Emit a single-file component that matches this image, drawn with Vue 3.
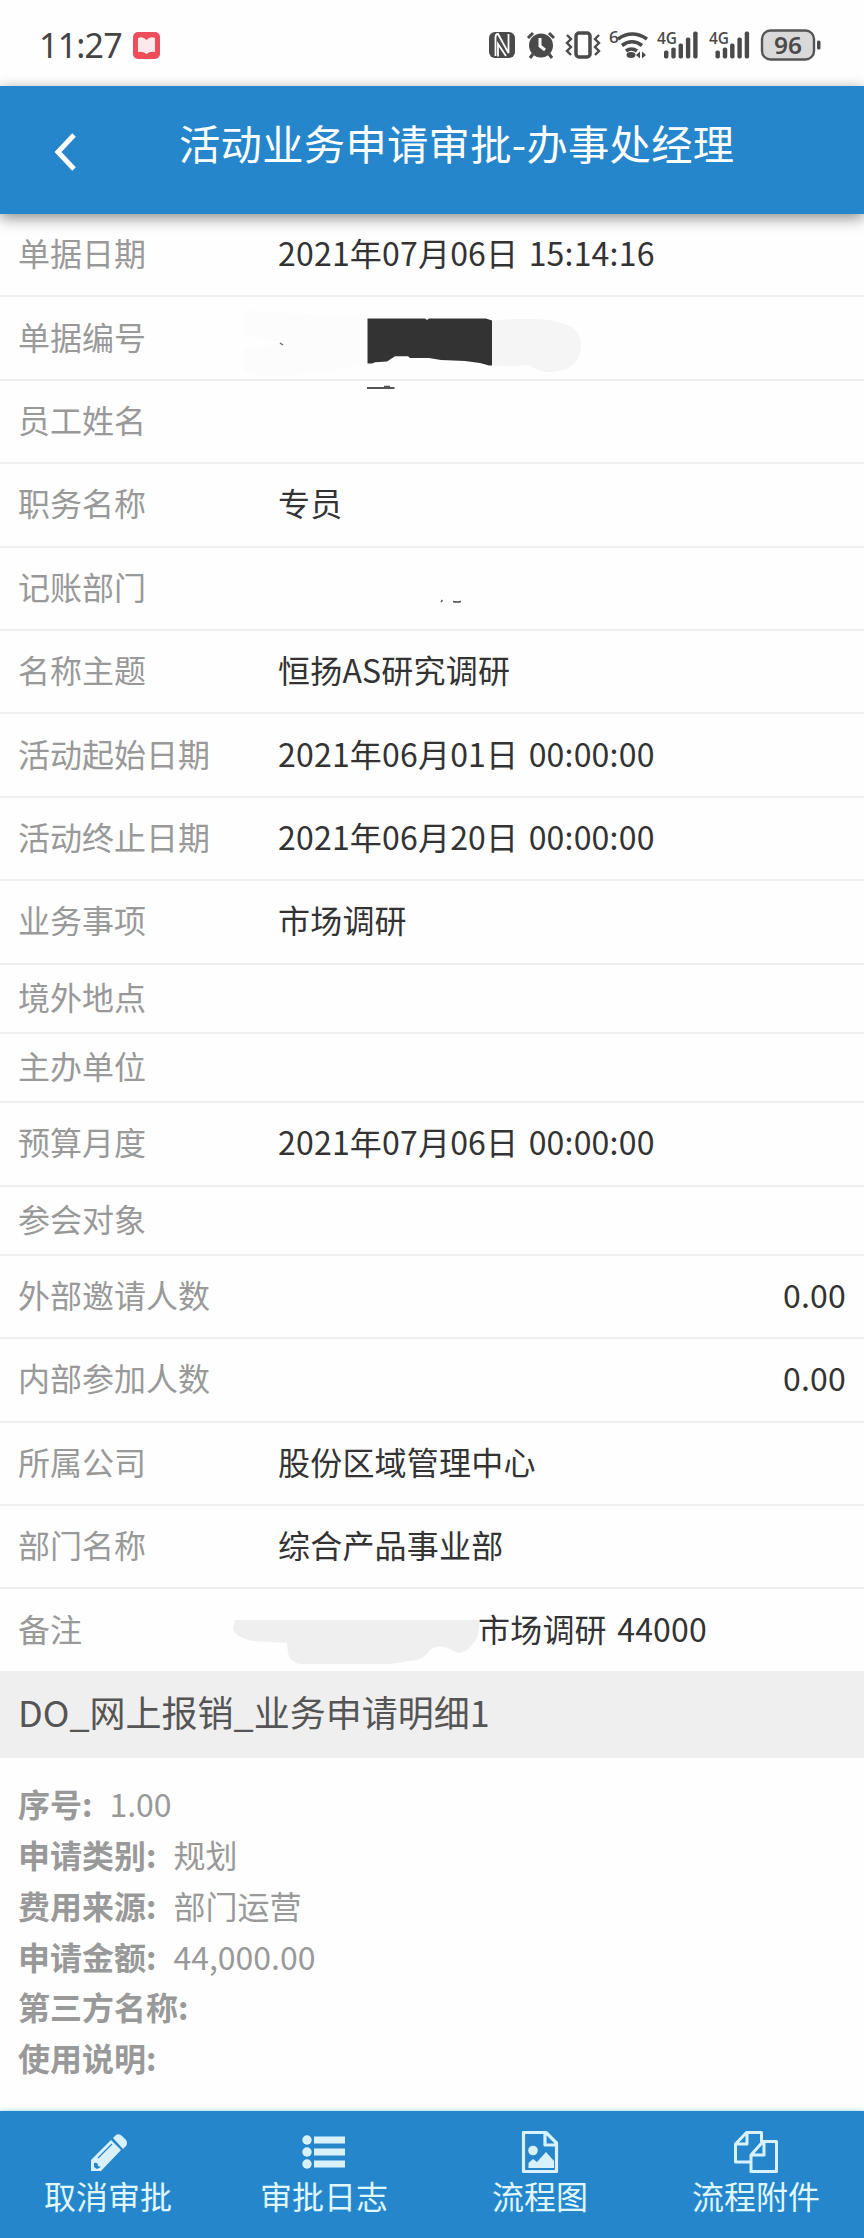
<template>
    <div class="page">
        <div class="status-bar">
            <span class="clock">11:27</span>
            <svg class="app-badge" viewBox="0 0 27 27">
                <rect width="27" height="27" rx="5" fill="#ee4e5c" />
                <path d="M5 6 Q10 4 13.5 8 Q17 4 22 6 V20 Q17 19 13.5 22 Q10 19 5 20 Z" fill="#fde9ec" />
            </svg>
            <svg class="status-icons" viewBox="0 0 340 40">
                <g fill="#4a4a4a">
                    <rect x="2" y="7" width="26" height="26" rx="6" />
                    <path d="M8.500 31V12Q8.500 9 11 9L21.500 28V9M11 31.500V19l8 12" fill="none" stroke="#fff" stroke-width="1.800" />
                    <circle cx="54" cy="20.500" r="12" />
                    <path d="M41 13l5-5M67 13l-5-5M46 29l-3 4M62 29l3 4" stroke="#4a4a4a" stroke-width="3" />
                    <path d="M53 13v8l5 4" fill="none" stroke="#fff" stroke-width="3" />
                    <rect x="89" y="8" width="14" height="24" rx="3" fill="none" stroke="#4a4a4a" stroke-width="3.500" />
                    <path d="M80 10l4 4-4 4 4 4-4 4 4 4M112 10l-4 4 4 4-4 4 4 4-4 4" fill="none" stroke="#4a4a4a" stroke-width="2.400" />
                    <text x="122" y="18" class="tiny">6</text>
                    <g fill="none" stroke="#4a4a4a" stroke-width="3.600">
                        <path d="M131 14q14-10 29 0" />
                        <path d="M135 20.500q10-7.500 20 0" />
                        <path d="M139 26q5.500-4 11 0" />
                    </g>
                    <ellipse cx="144" cy="30" rx="4.500" ry="3" />
                    <path d="M149 30l4-3.500v7zM159 30l-4-3.500v7z" />
                    <text x="170" y="19" class="tiny" textLength="20" lengthAdjust="spacingAndGlyphs">4G</text>
                    <text x="222" y="19" class="tiny" textLength="20" lengthAdjust="spacingAndGlyphs">4G</text>
                    <g v-for="x in [177, 228.5]" :key="x">
                        <rect
                            v-for="(h, i) in [8, 11, 15, 21, 27]"
                            :key="h"
                            :x="x + i * 7.3"
                            :y="33.5 - h"
                            width="4.400"
                            :height="h"
                            rx="1.800"
                        />
                    </g>
                    <rect x="275" y="5.500" width="52" height="29" rx="8.500" fill="#d9d9d9" stroke="#555" stroke-width="2.400" />
                    <rect x="330" y="15.500" width="3.500" height="9" rx="1.500" />
                    <text x="287" y="28.500" class="battery" textLength="28" lengthAdjust="spacingAndGlyphs">96</text>
                </g>
            </svg>
        </div>

        <header class="title-bar">
            <svg class="back" viewBox="0 0 24 38">
                <path d="M20 2 L4 19 L20 36" fill="none" stroke="#fff" stroke-width="5" />
            </svg>
            <h1>活动业务申请审批-办事处经理</h1>
        </header>

        <ul class="field-list">
            <li v-for="field in fields" :key="field.label" class="field" :class="{ short: field.short }">
                <span class="label">{{ field.label }}</span>
                <span class="value" :class="{ number: field.number, indent: field.indent }">{{ field.value }}</span>
                <svg v-if="field.mask === 'code'" class="mask mask-code" viewBox="0 0 360 92">
                    <path d="M5 11 L128 19 V64 Q80 76 40 77 Q8 77 5 71 V50 Q40 46 40 43 Q25 40 5 35Z" fill="#fcfcfc" />
                    <path d="M250 22 L275 20 H300 Q314 21 322 24 Q342 28 342 47 Q341 68 320 72 Q304 76 290 66 Q270 68 250 66Z" fill="#f5f5f5" />
                    <path d="M128.500 19.500H186l2 1.500 2-1.500h57l6 2V66.500h-3L241 64l-15-2-24-1-12-2h-19l-2-1.700H156l-8 5.300-12 .700-3 1.300h-4.500z" fill="#333" />
                    <path d="M41 44l3 2" stroke="#666" stroke-width="1.500" />
                    <path d="M128 89h27.500M145 87.600h6" stroke="#555" stroke-width="1.800" />
                </svg>
                <svg v-if="field.mask === 'dept'" class="mask mask-dept" viewBox="0 0 24 6">
                    <path d="M1 4l1.500-2M13 3.500q4 1 8 0" fill="none" stroke="#555" stroke-width="1.400" />
                </svg>
                <svg v-if="field.mask === 'remark'" class="mask mask-remark" viewBox="0 0 250 50">
                    <path d="M3 1 H247 Q249 17 239 27 Q233 34 226 34 L213 28 Q204 26 198 31 Q191 43 175 42 Q160 46 140 45 H68 Q57 43 56 34 L55 24 L21 22 Q2 18 1 9Z" fill="#efefef" />
                </svg>
            </li>
        </ul>

        <h2 class="section-title">DO_网上报销_业务申请明细1</h2>

        <div class="detail">
            <p v-for="item in details" :key="item.label">
                <b>{{ item.label }}:</b>
                <span>{{ item.value }}</span>
            </p>
        </div>

        <nav class="toolbar">
            <a class="tool">
                <svg viewBox="0 0 44 44">
                    <path d="M5 40V29L25 9l10 10-20 21Z" fill="#d9f1fd" />
                    <path d="M27 7l3-3q3-2 6 1l4 4q2 3 0 6l-3 3z" fill="#d9f1fd" />
                    <path d="M12 27L26 13" stroke="#2686cc" stroke-width="1.200" />
                    <path d="M8 32q4-1 4 3l3 1-4 2-3-2z" fill="#2686cc" />
                </svg>
                <span>取消审批</span>
            </a>
            <a class="tool">
                <svg viewBox="0 0 44 44">
                    <g fill="#d9f1fd">
                        <circle cx="5" cy="9" r="4.700" />
                        <circle cx="5" cy="21" r="4.700" />
                        <circle cx="5" cy="33" r="4.700" />
                        <path d="M12 5.500h31v7H12zM12 17.500h31v7H12zM12 29.500h31v7H12z" />
                    </g>
                </svg>
                <span>审批日志</span>
            </a>
            <a class="tool">
                <svg viewBox="0 0 44 44">
                    <path d="M5.500 1.500H28L38.500 12V40.500H5.500ZM27 2V14H38" fill="none" stroke="#d9f1fd" stroke-width="3.200" stroke-linejoin="round" />
                    <circle cx="15" cy="19.500" r="4.800" fill="#d9f1fd" />
                    <path d="M10.500 37V32l4.500-4 4 3 9-10 8 9v7z" fill="#d9f1fd" />
                </svg>
                <span>流程图</span>
            </a>
            <a class="tool">
                <svg viewBox="0 0 44 44">
                    <g fill="none" stroke="#d9f1fd" stroke-width="3" stroke-linejoin="round">
                        <path d="M17 31H1.500V13L12.500 1.500H27.500V11M13 2V13H2" />
                        <path d="M17 24L29 10.500H42.500V40.500H17ZM30 11V24H18" />
                    </g>
                </svg>
                <span>流程附件</span>
            </a>
        </nav>
    </div>
</template>

<script setup>
const fields = [
    { label: '单据日期', value: '2021年07月06日 15:14:16' },
    { label: '单据编号', value: '', mask: 'code' },
    { label: '员工姓名', value: '' },
    { label: '职务名称', value: '专员' },
    { label: '记账部门', value: '', mask: 'dept' },
    { label: '名称主题', value: '恒扬AS研究调研' },
    { label: '活动起始日期', value: '2021年06月01日 00:00:00' },
    { label: '活动终止日期', value: '2021年06月20日 00:00:00' },
    { label: '业务事项', value: '市场调研' },
    { label: '境外地点', value: '', short: true },
    { label: '主办单位', value: '', short: true },
    { label: '预算月度', value: '2021年07月06日 00:00:00' },
    { label: '参会对象', value: '', short: true },
    { label: '外部邀请人数', value: '0.00', number: true },
    { label: '内部参加人数', value: '0.00', number: true },
    { label: '所属公司', value: '股份区域管理中心' },
    { label: '部门名称', value: '综合产品事业部' },
    { label: '备注', value: '市场调研 44000', indent: true, mask: 'remark' },
];

const details = [
    { label: '序号', value: '1.00' },
    { label: '申请类别', value: '规划' },
    { label: '费用来源', value: '部门运营' },
    { label: '申请金额', value: '44,000.00' },
    { label: '第三方名称', value: '' },
    { label: '使用说明', value: '' },
];
</script>

<style>
body {
    margin: 0;
    background: #fefefe;
}
</style>

<style scoped>
.page {
    display: flex;
    flex-direction: column;
    width: 864px;
    height: 2238px;
    overflow: hidden;
    background: #fefefe;
    font-family: "Noto Sans CJK SC", sans-serif;
}

.status-bar {
    display: flex;
    align-items: center;
    box-sizing: border-box;
    height: 86px;
    padding: 4px 0 0 39px;
    flex: none;
}

.clock {
    width: 85px;
    font-family: "Noto Sans", sans-serif;
    font-size: 34px;
    letter-spacing: -0.8px;
    color: #444;
}

.app-badge {
    width: 27px;
    height: 27px;
    margin-left: 9px;
}

.status-icons {
    width: 340px;
    height: 40px;
    margin-left: 327px;
}

.tiny {
    font-family: "Open Sans", sans-serif;
    font-size: 17px;
    font-weight: 600;
}

.battery {
    font-family: "Noto Sans", sans-serif;
    font-size: 24px;
    font-weight: 600;
}

.title-bar {
    position: relative;
    z-index: 1;
    display: flex;
    align-items: center;
    box-sizing: border-box;
    height: 128px;
    padding-left: 54px;
    flex: none;
    background: #2686cc;
    box-shadow: 0 4px 14px rgba(0, 0, 0, 0.45);
}

.back {
    width: 24px;
    height: 38px;
    margin-top: 3px;
}

.title-bar h1 {
    margin: 0 0 16px 101px;
    font-size: 41.3px;
    font-weight: 400;
    line-height: 60px;
    letter-spacing: 0.3px;
    color: #fff;
    white-space: nowrap;
}

.field-list {
    list-style: none;
    margin: 0;
    padding: 0;
    flex: none;
}

.field {
    position: relative;
    display: flex;
    align-items: center;
    box-sizing: border-box;
    height: 83.4px;
    padding: 0 18px 5px;
    border-bottom: 2px solid #efefef;
    font-size: 32px;
    line-height: 48px;
}

.field.short {
    height: 69.3px;
}

.field:last-child {
    height: 81.8px;
    border-bottom: none;
}

.label {
    width: 260px;
    color: #999;
}

.value {
    flex: 1;
    color: #333;
    letter-spacing: 0.2px;
    word-spacing: 3px;
    white-space: nowrap;
}

.value.number {
    text-align: right;
}

.value.indent {
    padding-left: 200px;
}

.mask {
    position: absolute;
}

.mask-code {
    left: 239px;
    top: 2px;
    width: 360px;
    height: 92px;
}

.mask-dept {
    left: 440px;
    top: 50px;
    width: 24px;
    height: 6px;
}

.mask-remark {
    left: 232px;
    top: 30px;
    width: 250px;
    height: 50px;
}

.section-title {
    margin: 0;
    padding: 0 18px;
    height: 87px;
    flex: none;
    background: #efefef;
    color: #555;
    font-size: 36px;
    font-weight: 400;
    line-height: 80px;
}

.detail {
    flex: 1;
    padding: 20px 18px 0;
    color: #999;
    font-size: 32px;
    line-height: 50.8px;
}

.detail p {
    display: flex;
    gap: 17px;
    margin: 0;
}

.toolbar {
    display: grid;
    grid-template-columns: repeat(4, 1fr);
    height: 127px;
    flex: none;
    background: #2686cc;
    box-shadow: 0 -1px 3px rgba(120, 215, 235, 0.6);
}

.tool {
    display: flex;
    flex-direction: column;
    align-items: center;
    padding-top: 20px;
    color: #dff7ff;
    font-size: 32px;
    line-height: 41px;
}

.tool svg {
    width: 44px;
    height: 44px;
}
</style>
